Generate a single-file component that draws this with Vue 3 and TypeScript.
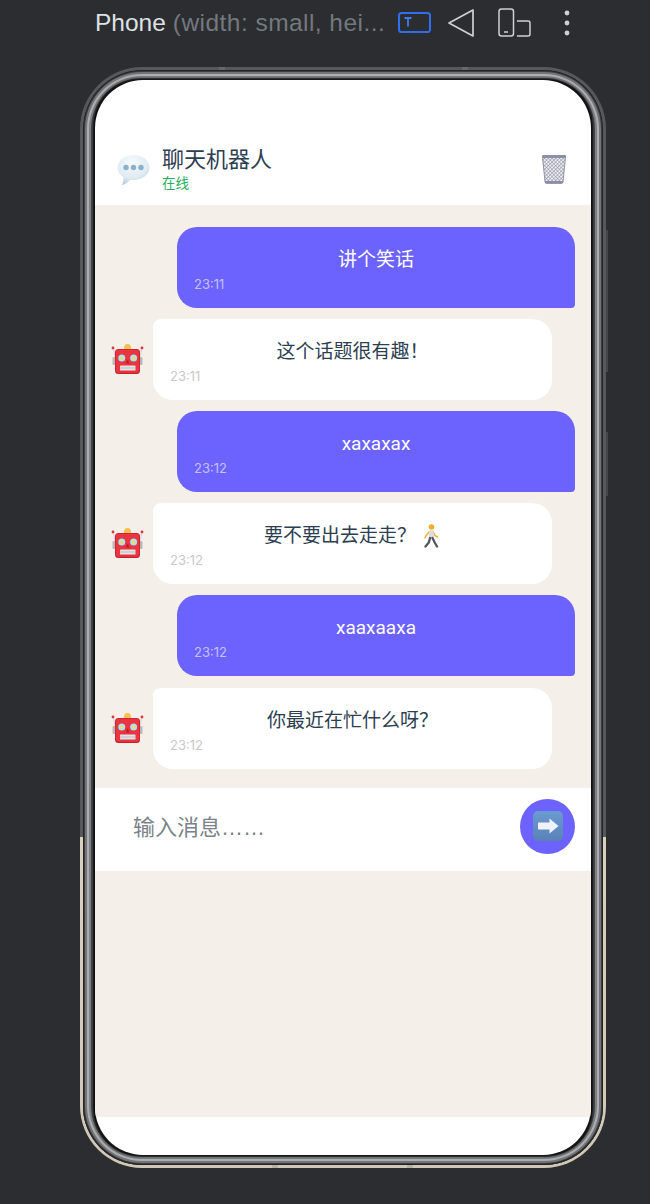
<script setup lang="ts">
import { ref } from 'vue'

interface Message {
  from: 'user' | 'bot'
  text: string
  time: string
  walker?: boolean
}

const draft = ref('')

const messages: Message[] = [
  { from: 'user', text: '讲个笑话', time: '23:11' },
  { from: 'bot', text: '这个话题很有趣\uFF01', time: '23:11' },
  { from: 'user', text: 'xaxaxax', time: '23:12' },
  { from: 'bot', text: '要不要出去走走\uFF1F', time: '23:12', walker: true },
  { from: 'user', text: 'xaaxaaxa', time: '23:12' },
  { from: 'bot', text: '你最近在忙什么呀\uFF1F', time: '23:12' },
]
</script>

<template>
  <div class="page">
    <div class="toolbar">
      <div class="device-name">
        <span class="name">Phone</span>
        <span class="spec">(width: small, hei...</span>
      </div>
      <svg class="tool tool-text" width="33" height="21" viewBox="0 0 33 21" fill="none">
        <rect x="1" y="1" width="31" height="19" rx="2.5" stroke="#2f6fed" stroke-width="2" />
        <path d="M6.5 6h7M10 6v8.5" stroke="#3d7bf2" stroke-width="1.8" />
      </svg>
      <svg class="tool tool-back" width="28" height="30" viewBox="0 0 28 30" fill="none">
        <path d="M26 2v26L2 15z" stroke="#ced0d6" stroke-width="1.7" stroke-linejoin="round" />
      </svg>
      <svg class="tool tool-rotate" width="33" height="30" viewBox="0 0 33 30" fill="none">
        <rect x="1" y="1" width="14.5" height="27" rx="2.5" stroke="#ced0d6" stroke-width="1.5" />
        <path d="M6 24h4" stroke="#ced0d6" stroke-width="1.5" />
        <path d="M19 13h11a2 2 0 0 1 2 2v11a2 2 0 0 1-2 2H19" stroke="#ced0d6" stroke-width="1.5" />
      </svg>
      <svg class="tool tool-more" width="8" height="28" viewBox="0 0 8 28" fill="#ced0d6">
        <circle cx="4" cy="4" r="2.4" />
        <circle cx="4" cy="14" r="2.4" />
        <circle cx="4" cy="24" r="2.4" />
      </svg>
    </div>

    <div class="phone">
      <i class="notch n-top-l"></i>
      <i class="notch n-top-r"></i>
      <i class="notch n-bot-l"></i>
      <i class="notch n-bot-r"></i>
      <i class="side-key key-a"></i>
      <i class="side-key key-b"></i>
      <div class="bezel">
        <div class="glass">
          <div class="screen">
            <div class="status-space"></div>
            <header class="chat-header">
              <svg class="balloon" width="33" height="32" viewBox="0 0 33 32">
                <defs>
                  <radialGradient id="balloonFill" cx="45%" cy="25%" r="80%">
                    <stop offset="0" stop-color="#f6fafc" />
                    <stop offset="0.65" stop-color="#dfeaf2" />
                    <stop offset="1" stop-color="#a9c6da" />
                  </radialGradient>
                </defs>
                <path
                  d="M16.500 1C7.500 1 .5 6.300.5 13.200c0 4.200 2.500 7.700 6 10 0 2.700-.6 5.300-1.500 8 3.600-1.300 6.400-3.400 8.400-5.500 1 .2 2 .2 3.100.2 9 0 16-5.800 16-12.700C32.500 6.300 25.500 1 16.500 1z"
                  fill="url(#balloonFill)"
                />
                <circle cx="9" cy="13.500" r="2.700" fill="#8fb0cc" />
                <circle cx="16.500" cy="13.500" r="2.700" fill="#8fb0cc" />
                <circle cx="24" cy="13.500" r="2.700" fill="#8fb0cc" />
              </svg>
              <div class="title-block">
                <div class="title">聊天机器人</div>
                <div class="online">在线</div>
              </div>
              <svg class="trash" width="26" height="30" viewBox="0 0 26 30">
                <defs>
                  <pattern id="mesh" width="2.600" height="2.600" patternUnits="userSpaceOnUse" patternTransform="rotate(45)">
                    <rect width="2.600" height="2.600" fill="#eef0f4" />
                    <path d="M0 0h2.600M0 0v2.600" stroke="#7d8194" stroke-width="1" />
                  </pattern>
                </defs>
                <path d="M1.500 3h23L22 28a1.500 1.500 0 0 1-1.500 1.300h-15A1.500 1.500 0 0 1 4 28z" fill="url(#mesh)" />
                <path d="M1.500 3h23L22 28a1.500 1.500 0 0 1-1.500 1.300h-15A1.500 1.500 0 0 1 4 28z" fill="none" stroke="#7b7f92" stroke-width="0.8" />
                <rect x="1" y="1" width="24" height="3" rx="1" fill="#8d90a3" />
                <rect x="4" y="27" width="18" height="2.500" rx="1" fill="#8a8da0" />
              </svg>
            </header>

            <main class="chat-list">
              <div v-for="(msg, i) in messages" :key="i" class="row" :class="msg.from">
                <svg v-if="msg.from === 'bot'" class="robot" width="34" height="34" viewBox="0 0 34 34">
                  <circle cx="2" cy="5" r="1.400" fill="#e2303e" />
                  <circle cx="31" cy="5" r="1.400" fill="#e2303e" />
                  <path d="M2.500 6l1.500 8M30.500 6l-1.500 8" stroke="#c9c9c9" stroke-width="0.800" />
                  <rect x="1.500" y="14" width="3" height="8" rx="1" fill="#b9b9b9" />
                  <rect x="28.500" y="14" width="3" height="8" rx="1" fill="#b9b9b9" />
                  <path d="M13 6.500c0-4 .8-5.500 3.500-5.500S20 2.500 20 6.500z" fill="#f6c04c" />
                  <rect x="4" y="6" width="25" height="25" rx="3.500" fill="#c9202e" />
                  <rect x="4.800" y="6.800" width="23.400" height="23" rx="3" fill="#e93442" />
                  <circle cx="10.800" cy="15" r="3.500" fill="#a5e3f7" />
                  <circle cx="22.600" cy="15" r="3.500" fill="#a5e3f7" />
                  <circle cx="10.800" cy="15" r="1.800" fill="#f7dc5f" />
                  <circle cx="22.600" cy="15" r="1.800" fill="#f7dc5f" />
                  <path d="M16.700 16.500l-1.700 3.800h3.400z" fill="#b81624" />
                  <rect x="9" y="22.500" width="15.500" height="5" rx="0.600" fill="#e2e2e2" />
                  <path d="M9 25h15.500" stroke="#a9a9a9" stroke-width="0.600" />
                </svg>
                <div class="bubble">
                  <div class="text">
                    <span>{{ msg.text }}</span>
                    <svg v-if="msg.walker" class="walker" width="20" height="24" viewBox="0 0 20 24">
                      <path d="M8.500 7.500l-3 3.500-1.500 3M12 7.500l2 4 2.500 1.500" stroke="#eab23a" stroke-width="1.500" fill="none" stroke-linecap="round" />
                      <circle cx="10.500" cy="3" r="2.800" fill="#efae2c" />
                      <path d="M8 6.300h4.500l.6 7.700H8.300z" fill="#dcdde0" />
                      <path d="M9 14l-1.200 4.500-3.300 4M11.500 14l2.200 4.500 2.300 4" stroke="#50555f" stroke-width="2.300" fill="none" stroke-linecap="round" />
                    </svg>
                  </div>
                  <div class="time">{{ msg.time }}</div>
                </div>
              </div>
            </main>

            <footer class="input-bar">
              <input v-model="draft" class="msg-input" type="text" placeholder="输入消息……" />
              <button class="send" aria-label="发送">
                <svg width="30" height="30" viewBox="0 0 30 30">
                  <defs>
                    <linearGradient id="keyFill" x1="0" y1="0" x2="0" y2="1">
                      <stop offset="0" stop-color="#6a9bd0" />
                      <stop offset="1" stop-color="#5a82b8" />
                    </linearGradient>
                  </defs>
                  <rect width="30" height="30" rx="5" fill="url(#keyFill)" />
                  <path d="M5 12.500a1 1 0 0 1 1-1h10.500V7.500L25.500 15l-9 7.500v-4H6a1 1 0 0 1-1-1z" fill="#f0f2fa" />
                </svg>
              </button>
            </footer>

            <div class="empty-area"></div>
            <div class="nav-space"></div>
          </div>
        </div>
      </div>
    </div>
  </div>
</template>

<style scoped>
.page {
  width: 650px;
  height: 1204px;
  overflow: hidden;
  background: #2b2d30;
  font-family: Inter, 'Noto Sans CJK SC', sans-serif;
}

.toolbar {
  display: flex;
  align-items: center;
  height: 45px;
  margin-bottom: 22px;
  padding-left: 95px;
}

.device-name {
  width: 303px;
  white-space: nowrap;
  overflow: hidden;
  font-family: 'Liberation Sans', sans-serif;
  font-size: 24.500px;
}

.name {
  color: #dfe1e5;
  margin-right: 7px;
}

.spec {
  color: #74787f;
  letter-spacing: 0.45px;
}

.tool {
  flex: none;
  display: block;
}

.tool-back {
  margin-left: 16px;
}

.tool-rotate {
  margin-left: 23px;
}

.tool-more {
  margin-left: 32px;
}

.phone {
  position: relative;
  box-sizing: border-box;
  width: 526px;
  height: 1101px;
  margin-left: 80px;
  padding: 3px;
  border-radius: 62px;
  background: linear-gradient(to bottom, #56585b 0, #56585b 770px, #d8d1bf 770px, #cfc8b6 100%);
}

.bezel {
  box-sizing: border-box;
  height: 100%;
  padding: 10px 12px;
  border-radius: 59px;
  background: #2a2b2d;
  box-shadow: inset 0 0 0 1px #232427, inset 0 0 0 2px #3c3d40, inset 0 0 0 4px #737477, inset 0 0 0 6px #acadaf, inset 0 0 0 8px #7e7f82, inset 0 0 0 10px #454649;
}

.glass {
  height: 100%;
  border-radius: 44px;
  background: #161617;
  box-shadow: 0 0 3px 1px #000;
}

.screen {
  display: flex;
  flex-direction: column;
  height: 100%;
  overflow: hidden;
  border-radius: 48px;
  background: #fff;
}

.notch {
  position: absolute;
  width: 6px;
  height: 3px;
  background: #66686b;
}

.n-top-l {
  top: 0;
  left: 139px;
}

.n-top-r {
  top: 0;
  left: 382px;
}

.n-bot-l {
  bottom: 0;
  left: 192px;
  background: #b5b2a6;
}

.n-bot-r {
  bottom: 0;
  left: 327px;
  background: #b5b2a6;
}

.side-key {
  position: absolute;
  right: -2px;
  width: 2px;
  background: #45464a;
}

.key-a {
  top: 163px;
  height: 142px;
}

.key-b {
  top: 365px;
  height: 64px;
}

.status-space {
  flex: none;
  height: 50px;
}

.chat-header {
  flex: none;
  display: flex;
  align-items: center;
  gap: 12px;
  height: 75px;
  padding: 0 24px 0 22px;
  box-sizing: border-box;
}

.balloon {
  flex: none;
  margin-top: 4px;
}

.title-block {
  flex: 1;
  margin-top: 2px;
}

.title {
  font-size: 22px;
  line-height: 26px;
  color: #2c3e50;
}

.online {
  margin-top: 3px;
  font-size: 13.500px;
  line-height: 17px;
  color: #27ae60;
}

.trash {
  flex: none;
  margin-top: 3px;
}

.chat-list {
  flex: none;
  display: flex;
  flex-direction: column;
  gap: 11.120px;
  box-sizing: border-box;
  height: 583px;
  padding: 22px 16px 0;
  background: #f4efe9;
}

.row {
  display: flex;
  align-items: center;
}

.row.user {
  justify-content: flex-end;
}

.robot {
  flex: none;
  margin: 1px 8px 0 0;
}

.bubble {
  box-sizing: border-box;
  width: 399px;
  height: 81px;
  padding: 17px 17px 0;
  border-radius: 8px 20px 20px 20px;
  background: #fff;
  color: #2c3e50;
}

.row.user .bubble {
  width: 398px;
  border-radius: 20px 20px 4px 20px;
  background: #6c63ff;
  color: #fff;
}

.text {
  display: flex;
  align-items: center;
  justify-content: center;
  gap: 5px;
  height: 32px;
  font-family: Roboto, 'Noto Sans CJK SC', sans-serif;
  font-size: 19px;
  line-height: 32px;
}

.walker {
  flex: none;
}

.time {
  font-size: 13px;
  line-height: 16px;
  color: #c9c9c9;
}

.row.user .time {
  color: rgba(255, 255, 255, 0.6);
}

.input-bar {
  flex: none;
  display: flex;
  align-items: center;
  gap: 12px;
  box-sizing: border-box;
  height: 83px;
  padding: 0 16px 7px 38px;
  background: #fff;
}

.msg-input {
  flex: 1;
  min-width: 0;
  margin-top: 3px;
  padding: 0;
  border: none;
  outline: none;
  background: transparent;
  font-family: 'Liberation Sans', 'Noto Sans CJK SC', sans-serif;
  font-size: 22px;
  color: #2c3e50;
}

.msg-input::placeholder {
  color: #7a8288;
  opacity: 1;
}

.send {
  flex: none;
  display: flex;
  align-items: center;
  justify-content: center;
  width: 55px;
  height: 55px;
  padding: 0;
  border: none;
  border-radius: 50%;
  background: #6c63ff;
}

.empty-area {
  flex: 1;
  background: #f4efe9;
}

.nav-space {
  flex: none;
  height: 38px;
}
</style>
